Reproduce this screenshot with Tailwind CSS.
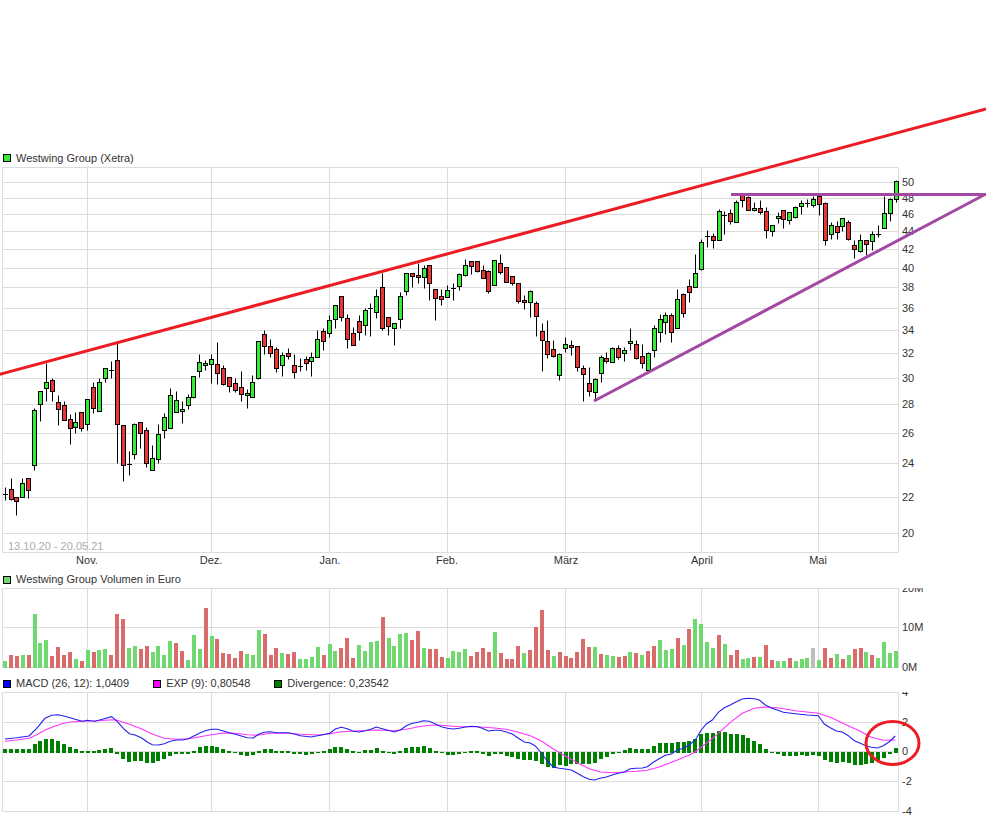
<!DOCTYPE html>
<html lang="en">
<head>
    <meta charset="UTF-8">
    <title>Westwing Group (Xetra)</title>
    <script src="https://cdn.jsdelivr.net/npm/@tailwindcss/browser@4"></script>
</head>
<body class="bg-white">
<div class="relative w-[986px] h-[821px] overflow-hidden bg-white pt-[149px] font-['Liberation_Sans',sans-serif] text-[11px] text-[#333]">

    <!-- Price -->
    <div class="flex items-center gap-[5px] h-[18px] pl-[3px]">
        <span class="w-[8px] h-[8px] border border-black bg-[#33ee33]"></span>
        <span>Westwing Group (Xetra)</span>
    </div>
    <svg id="price" class="block fill-[#333]" width="986" height="404" viewBox="0 167 986 404"></svg>

    <!-- Volume -->
    <div class="flex items-center gap-[5px] h-[17px] pl-[3px]">
        <span class="w-[8px] h-[8px] border border-black bg-[#6fd96f]"></span>
        <span>Westwing Group Volumen in Euro</span>
    </div>
    <svg id="volume" class="block fill-[#333]" width="986" height="87" viewBox="0 588 986 87"></svg>

    <!-- MACD -->
    <div class="flex items-center h-[17px] pl-[3px]">
        <span class="w-[8px] h-[8px] border border-black bg-[#0000ff]"></span>
        <span class="ml-[5px]">MACD (26, 12): 1,0409</span>
        <span class="w-[8px] h-[8px] border border-black bg-[#ff00ff] ml-[24px]"></span>
        <span class="ml-[5px]">EXP (9): 0,80548</span>
        <span class="w-[8px] h-[8px] border border-black bg-[#008000] ml-[24px]"></span>
        <span class="ml-[5px]">Divergence: 0,23542</span>
    </div>
    <svg id="macd" class="block fill-[#333]" width="986" height="129" viewBox="0 692 986 129"></svg>

    <!-- hand drawn trend lines, over the whole chart -->
    <svg class="absolute inset-0" width="986" height="821" fill="none">
        <line x1="-1" y1="374.5" x2="986" y2="109" stroke="#ed1c24" stroke-width="3"/>
        <line x1="594" y1="401" x2="985" y2="194.5" stroke="#a349a4" stroke-width="3"/>
        <line x1="731" y1="194.5" x2="986" y2="194.5" stroke="#a349a4" stroke-width="3"/>
        <ellipse cx="892.5" cy="743" rx="26.5" ry="21.5" stroke="#ed1c24" stroke-width="3"/>
    </svg>
</div>

<script>
    const NS = 'http://www.w3.org/2000/svg';
    const VX = [87.5, 211.5, 329.5, 447.5, 565.5, 701.5, 818.5];
    const LEFT = 2.5, RIGHT = 898.5;

    function add(svg, tag, attrs, text) {
        const el = document.createElementNS(NS, tag);
        for (const k in attrs) el.setAttribute(k, attrs[k]);
        if (text) el.textContent = text;
        svg.appendChild(el);
        return el;
    }

    function grid(svg, top, bottom, ys) {
        const g = { stroke: '#dcdcdc', 'stroke-width': 1 };
        ys.forEach(y => add(svg, 'line', { x1: LEFT, x2: RIGHT, y1: y, y2: y, ...g }));
        [LEFT, ...VX, RIGHT].forEach(x => add(svg, 'line', { x1: x, x2: x, y1: top, y2: bottom, ...g }));
    }

    function axis(svg, labels) {
        labels.forEach(([t, y]) => add(svg, 'text', { x: 902, y: y + 4 }, t));
    }

    // candles: hi, body top, body bottom, lo, colour (1 up, 0 down) in crop coordinates
    const block1 = [
        [440,463,463,480,2],[415,448,476,480,0],[470,470,482,525,0],[415,428,472,472,1],[415,415,451,473,0],
        [205,211,376,390,1],[154,154,193,243,1],[70,127,143,183,1],[115,121,154,183,0],[165,187,208,255,0],
        [183,196,241,241,0],[223,236,263,312,0],[217,247,260,278,1],[217,217,265,272,0],[178,178,253,270,1],
        [127,142,205,218,0],[115,127,214,214,1],[85,85,115,127,1],[63,90,90,115,2],[3,61,253,370,0],
        [256,256,376,422,0],[333,371,371,405,2],[250,253,343,356,1],[247,247,280,324,0],[262,271,370,380,0],
        [315,355,391,391,1],[253,283,358,368,1],[220,232,271,294,1],[145,166,265,265,1],[153,181,217,217,1],
        [183,208,214,248,1],[163,172,196,207,1],[109,109,172,175,1],[43,67,94,112,1],[60,70,76,90,1],
        [43,58,73,128,1],[5,73,100,133,0],[75,85,133,135,0],[112,112,139,157,0],[115,130,151,157,0],
        [94,142,163,183,0],[148,160,166,203,1],[106,127,172,172,1],[4,4,115,118,1],[-30,-18,19,42,0],
        [-3,19,40,50,0],[22,28,85,96,0],[37,46,76,108,1],[25,40,49,58,0],[43,76,97,114,0],
        [55,77,77,93,2],[48,58,70,90,0],[37,52,64,108,1],[-30,-2,52,52,1],[-36,-27,2,30,0]
    ].map(c => [340, c]);
    const block2 = [
        [226,241,278,291,1],[196,196,238,263,1],[169,169,232,242,0],[223,235,298,323,0],[262,280,316,316,0],
        [226,244,277,300,0],[205,211,256,284,1],[190,203,203,287,2],[148,169,217,233,1],[100,142,263,269,0],
        [232,232,259,284,0],[250,250,265,314,1],[157,169,238,263,1],[100,100,154,164,1],[100,100,109,140,0],
        [70,106,112,128,0],[76,85,112,143,1],[76,76,130,179,0],[148,148,175,239,0],[148,169,178,194,0],
        [136,151,172,172,1],[130,144,144,179,2],[100,103,139,149,1],[58,76,106,109,1],[64,64,79,103,0],
        [64,64,94,97,0],[76,91,115,115,0],[91,94,154,160,0],[61,61,136,136,1],[43,70,97,103,0],
        [82,82,127,127,0],[109,109,130,136,0],[130,130,184,188,0],[166,181,187,206,0],[151,154,187,232,1],
        [184,190,229,287,0],[250,274,301,392,0],[241,304,343,355,0],[301,328,349,352,0],[340,343,406,420,1],
        [292,313,325,335,1],[301,316,322,345,0],[319,319,382,392,0],[376,385,403,482,0],[381,430,454,469,0],
        [415,418,457,483,1],[346,352,400,427,1],[337,355,364,369,0],[322,325,367,367,1],[316,325,352,358,0],
        [322,331,340,362,1],[265,304,310,330,1],[301,313,355,358,0],[313,349,370,385,0],[337,340,391,391,1],
        [256,265,331,350,1],[223,238,277,305,1]
    ].map(c => [240, c]);
    const block3 = [
        [636,646,667,702,1],[640,645,695,725,0],[568,598,685,685,1],[580,583,640,652,0],[538,559,577,607,0],
        [463,520,562,562,1],[418,427,508,511,1],[391,407,407,440,2],[400,409,421,443,0],[328,334,421,421,1],
        [334,344,344,402,2],[328,340,364,373,0],[301,307,367,367,1],[280,285,301,320,0],[288,292,331,331,0],
        [307,325,331,334,1],[301,325,337,343,0],[322,334,391,415,0],[376,376,394,409,1],[337,349,355,370,1],
        [331,331,358,383,0],[337,337,361,373,1],[319,322,352,355,1],[301,310,319,341,1],[298,308,308,320,2],
        [288,298,316,322,1],[283,289,313,346,0],[307,310,421,434,0],[367,376,403,418,1],[364,379,397,417,0],
        [355,355,379,394,1],[361,367,418,421,0],[421,436,448,473,0],[403,421,454,457,1],[421,421,433,466,0],
        [394,403,424,451,1],[376,401,401,412,2],[288,340,385,385,1],[295,298,340,364,1],[240,244,298,307,1]
    ].map(c => [100, c]);
    const candles = [...block1, ...block2, ...block3];

    const barX = i => Math.round(3 + 5.9 * i);
    const wickX = i => Math.round(4.6 + 5.9 * i) + 0.5;

    // price panel
    const price = document.getElementById('price');
    grid(price, 167.5, 552.5, [167.5,182.5,198.5,214.5,231.5,249.5,268.5,287.5,308.5,330.5,353.5,378.5,404.5,433.5,463.5,497.5,533.5,552.5]);
    axis(price, [['50',182],['48',198],['46',214],['44',231],['42',249],['40',268],['38',287],['36',308],['34',330],['32',353],['30',378],['28',404],['26',433],['24',463],['22',497],['20',533]]);
    [['Nov.',87],['Dez.',211],['Jan.',330],['Feb.',447],['März',566],['April',702],['Mai',818]].forEach(([t, x]) =>
        add(price, 'text', { x, y: 564, 'text-anchor': 'middle' }, t));
    add(price, 'text', { x: 8, y: 550, fill: '#ababab' }, '13.10.20 - 20.05.21');

    candles.forEach(([base, c], i) => {
        const y = v => Math.round(base + v / 3) + 0.5;
        const x = wickX(i);
        add(price, 'line', { x1: x, x2: x, y1: y(c[0]), y2: y(c[3]), stroke: '#000' });
        if (c[4] === 2) {
            add(price, 'line', { x1: x - 2.5, x2: x + 2.5, y1: y(c[1]), y2: y(c[1]), stroke: '#000' });
        } else {
            add(price, 'rect', { x: x - 2, y: y(c[1]), width: 4, height: y(c[2]) - y(c[1]), stroke: '#000', fill: c[4] ? '#33ee33' : '#ee3333' });
        }
    });

    // volume panel, bar tops in crop coordinates
    const volume = document.getElementById('volume');
    grid(volume, 588.5, 667.5, [588.5, 627.5, 667.5]);
    axis(volume, [['20M',588],['10M',627],['0M',667]]);
    const volTops = [273,255,258,255,255,132,219,210,258,231,255,246,267,273,240,246,240,237,255,132,147,234,228,237,228,246,228,255,213,219,243,270,195,237,114,198,207,249,252,264,243,252,255,180,192,255,234,249,252,246,267,267,261,231,255,222,
        243,234,204,264,225,243,216,213,141,204,228,192,189,210,183,234,237,237,261,264,243,246,237,258,246,234,246,186,249,267,267,228,249,240,171,120,240,258,246,258,264,246,207,231,231,252,255,258,261,258,246,249,255,243,228,210,
        240,237,204,225,177,147,162,216,234,195,222,255,240,267,264,261,261,225,270,273,273,264,273,267,264,234,270,234,264,252,267,255,237,234,246,255,264,216,249,243];
    const volCol = 'grrgrgggrrrrgrgrggrrrggrrgggrrrggrgrrrrrrgggrrrgrrgggrgrggrrrrggggrggrrrgrggggrrrrrrrgrrrrggrrrrrggrgrgrgrrrggg';
    const volColours = ('g r r g r g g g r r r r g r g r g g r r r g g r r g g g g r r g g g r g r r r r r g g g r r r g r r g g g g r g ' +
        'g r r r g g g g r g g g g r r g r r r g g g g r r r r g r r r r g r r r r g r r r r r r g r g g r r g r g r r g g ' +
        'g r g r g g g g r g r r g g r g r r g g r g g g x g r r g r g r r g r g g g g g').split(' ');
    const fills = { g: '#6fd96f', r: '#d96b6b', x: '#bdbdbd' };
    volTops.forEach((t, i) => {
        const y = Math.round(570 + t / 3);
        add(volume, 'rect', { x: barX(i), y, width: 4, height: 668 - y, fill: fills[volColours[i]], 'shape-rendering': 'crispEdges' });
    });

    // MACD panel
    const macd = document.getElementById('macd');
    grid(macd, 692.5, 811.5, [692.5, 722.5, 751.5, 781.5, 811.5]);
    axis(macd, [['4',692],['2',722],['0',751],['-2',781],['-4',811]]);
    const div = [537,537,537,537,537,522,513,507,507,513,522,531,537,543,543,543,540,537,534,552,567,576,573,573,579,579,573,567,558,552,552,552,543,531,528,528,531,537,543,549,555,558,555,543,537,537,543,543,543,552,552,555,552,549,543,537,
        531,531,537,543,546,540,540,534,543,546,552,543,534,531,531,528,534,543,546,555,555,552,549,543,543,552,558,552,552,558,561,567,570,570,573,582,591,594,585,588,582,582,582,582,579,567,561,552,549,540,534,537,537,537,528,520,
        519,519,516,516,513,507,492,489,489,483,486,492,492,495,504,513,522,537,549,552,558,558,558,555,558,555,558,570,576,579,576,579,585,585,582,579,570,564,552,534];
    div.forEach((v, i) => {
        const y1 = Math.round(570 + Math.min(v, 546) / 3);
        const y2 = Math.round(570 + Math.max(v, 549) / 3);
        add(macd, 'rect', { x: barX(i), y: y1, width: 4, height: y2 - y1, fill: '#008000', 'shape-rendering': 'crispEdges' });
    });

    const path = (parts) => parts.map(([shift, pts]) =>
        pts.map(([x, y]) => ((x + shift) / 3).toFixed(1) + ',' + (570 + y / 3).toFixed(1)).join(' ')).join(' ');

    const expLine = path([
        [0, [[15,514],[50,510],[87,505],[110,494],[135,480],[160,470],[185,461],[210,456],[247,454],[285,453],[335,449],[352,451],[388,463],[424,476],[457,492],[493,505],[529,508],[565,506],[601,500],[634,494],[670,489],[706,490],[742,494],[775,496],[811,490],[865,490],[901,493],[952,495]]],
        [990, [[0,491],[34,485],[88,482],[139,480],[193,482],[229,478],[265,470],[298,466],[334,466],[388,470],[442,470],[493,474],[529,478],[565,487],[601,497],[634,513],[670,537],[706,558],[742,578],[778,596],[811,606],[847,608],[883,606],[919,604],[952,601]]],
        [1980, [[0,590],[52,570],[88,555],[106,545],[139,520],[175,490],[211,457],[247,430],[283,415],[316,411],[352,413],[406,422],[475,430],[511,442],[565,467],[601,484],[634,502],[670,511],[706,510]]]
    ]);
    const macdLine = path([
        [0, [[15,507],[50,503],[87,498],[110,475],[135,445],[155,436],[175,434],[200,440],[225,448],[247,454],[262,451],[285,454],[310,447],[335,440],[352,455],[370,475],[388,491],[405,495],[424,503],[442,516],[457,524],[475,525],[493,521],[511,514],[529,510],[547,510],[565,506],[583,497],[601,488],[616,482],[634,478],[652,478],[670,483],[688,488],[706,493],[724,498],[742,503],[760,504],[775,493],[793,487],[811,485],[829,488],[865,488],[883,492],[901,497],[934,501],[952,497],[970,494]]],
        [990, [[0,490],[16,477],[34,472],[52,476],[70,484],[88,486],[106,482],[122,478],[139,471],[157,476],[175,481],[193,486],[211,480],[229,467],[247,460],[265,457],[280,452],[298,454],[316,462],[334,470],[352,475],[370,477],[388,475],[406,471],[424,469],[442,470],[457,475],[475,483],[493,481],[511,481],[529,486],[547,492],[565,505],[583,516],[601,519],[616,528],[634,549],[652,573],[670,591],[688,595],[706,597],[724,600],[742,610],[760,620],[778,628],[793,630],[811,625],[829,621],[847,615],[865,610],[883,606],[901,596],[919,595],[937,594],[952,590],[970,577]]],
        [1980, [[0,565],[16,556],[34,552],[52,540],[70,535],[88,525],[106,510],[124,480],[139,462],[157,450],[175,427],[193,413],[211,405],[229,395],[247,387],[265,385],[283,386],[298,390],[316,405],[334,414],[352,420],[370,427],[388,429],[406,431],[442,435],[475,437],[493,462],[511,473],[529,483],[547,486],[565,497],[583,512],[601,520],[619,528],[634,532],[652,534],[670,527],[688,515],[706,498]]]
    ]);
    add(macd, 'polyline', { points: expLine, fill: 'none', stroke: '#ff33ff', 'stroke-width': 1.1 });
    add(macd, 'polyline', { points: macdLine, fill: 'none', stroke: '#2222ee', 'stroke-width': 1.1 });
</script>
</body>
</html>
